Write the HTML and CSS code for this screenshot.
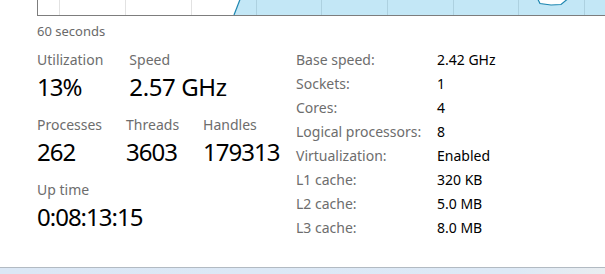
FILE: index.html
```html
<!DOCTYPE html>
<html>
<head>
<meta charset="utf-8">
<link rel="stylesheet" href="styles.css">
</head>
<body>
<div class="page">
  <div class="chart">
    <svg class="chart-svg" width="567" height="15" viewBox="0 0 567 15">
      <g class="grid">
        <line x1="21.5" y1="0" x2="21.5" y2="15"/>
        <line x1="87.5" y1="0" x2="87.5" y2="15"/>
        <line x1="153.5" y1="0" x2="153.5" y2="15"/>
        <line x1="218.5" y1="0" x2="218.5" y2="15"/>
        <line x1="283.5" y1="0" x2="283.5" y2="15"/>
        <line x1="349.5" y1="0" x2="349.5" y2="15"/>
        <line x1="415.5" y1="0" x2="415.5" y2="15"/>
        <line x1="480.5" y1="0" x2="480.5" y2="15"/>
        <line x1="546.5" y1="0" x2="546.5" y2="15"/>
      </g>
      <polygon class="fill" points="196,15 202,0 500,0 502,3.5 513,5 523,4.5 529,0 567,0 567,15"/>
      <polyline class="line" points="196,15 202,-0.5"/>
      <polyline class="line" points="500,-0.5 502,3.5 513,5 523,4.5 529,-0.5"/>
    </svg>
  </div>
  <div class="axis-label">60 seconds</div>

  <div class="stats">
    <div class="left">
      <div class="stat-row">
        <div class="stat">
          <div class="label">Utilization</div>
          <div class="value">13%</div>
        </div>
        <div class="stat">
          <div class="label">Speed</div>
          <div class="value value-unit">2.57 GHz</div>
        </div>
      </div>
      <div class="stat-row stat-row-tight">
        <div class="stat">
          <div class="label">Processes</div>
          <div class="value">262</div>
        </div>
        <div class="stat">
          <div class="label">Threads</div>
          <div class="value">3603</div>
        </div>
        <div class="stat">
          <div class="label">Handles</div>
          <div class="value">179313</div>
        </div>
      </div>
      <div class="stat-row">
        <div class="stat">
          <div class="label">Up time</div>
          <div class="value">0:08:13:15</div>
        </div>
      </div>
    </div>
    <div class="right">
      <div class="k">Base speed:</div><div class="v">2.42 GHz</div>
      <div class="k">Sockets:</div><div class="v">1</div>
      <div class="k">Cores:</div><div class="v">4</div>
      <div class="k">Logical processors:</div><div class="v">8</div>
      <div class="k">Virtualization:</div><div class="v">Enabled</div>
      <div class="k">L1 cache:</div><div class="v">320 KB</div>
      <div class="k">L2 cache:</div><div class="v">5.0 MB</div>
      <div class="k">L3 cache:</div><div class="v">8.0 MB</div>
    </div>
  </div>
</div>
<div class="bottom-bar"></div>
</body>
</html>
```
FILE: styles.css
```css
* { box-sizing: border-box; }
html, body { margin: 0; padding: 0; }
body {
  width: 605px;
  height: 274px;
  overflow: hidden;
  background: #ffffff;
  font-family: "Noto Sans", "Open Sans", sans-serif;
  color: #000;
  display: flex;
  flex-direction: column;
}
.page {
  flex: 1;
  padding-left: 37px;
}
.chart {
  height: 16px;
  border-left: 1px solid #7d7d7d;
  border-bottom: 1px solid #7d7d7d;
  overflow: hidden;
}
.chart-svg { display: block; }
.grid line { stroke: #e2e2e2; stroke-width: 1; }
.fill { fill: rgba(17, 158, 218, 0.25); }
.line { fill: none; stroke: #1d86b0; stroke-width: 1.2; }

.axis-label {
  margin-top: 7px;
  font-size: 13px;
  line-height: 16px;
  color: #6a6a6a;
}

.stats {
  display: flex;
  margin-top: 9px;
}
.left {
  width: 259px;
  display: flex;
  flex-direction: column;
  gap: 11px;
}
.stat-row {
  display: flex;
  gap: 26px;
}
.stat-row-tight { gap: 24px; }
.label {
  font-size: 14px;
  line-height: 24px;
  color: #6d6d6d;
}
.value {
  font-size: 24px;
  line-height: 30px;
  color: #000;
  letter-spacing: -1px;
}
.value-unit { letter-spacing: -0.4px; }
.right {
  display: grid;
  grid-template-columns: 141px auto;
  font-size: 14px;
  line-height: 24px;
}
.k { color: #6d6d6d; }
.v { color: #000; }

.bottom-bar {
  height: 7px;
  border-top: 1px solid #b2bac2;
  background: linear-gradient(to right, #dbe7f5 0%, #dde9f6 85%, #e9edf0 100%);
}
```
